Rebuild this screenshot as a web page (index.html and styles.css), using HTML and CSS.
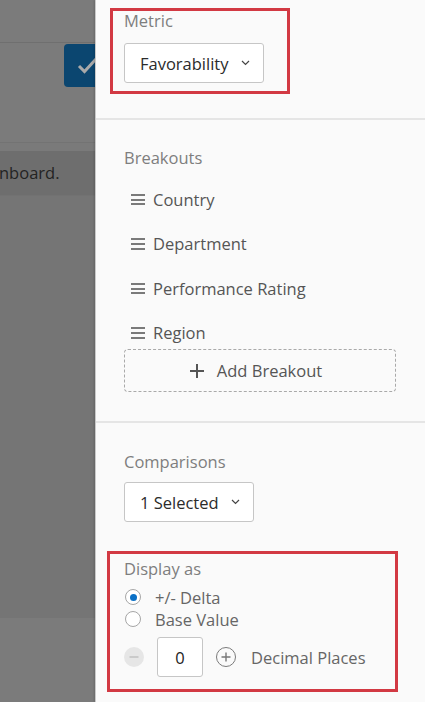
FILE: index.html
```html
<!DOCTYPE html>
<html>
<head>
<meta charset="utf-8">
<link rel="stylesheet" href="styles.css">
</head>
<body>
<div class="page">
  <div class="overlay">
    <div class="ov-top"></div>
    <div class="ov-row">
      <div class="ov-btn">
        <svg width="44" height="43" viewBox="0 0 44 43"><path d="M15 22 L20.5 27.5 L32 15" fill="none" stroke="#a9a9a9" stroke-width="3"/></svg>
      </div>
    </div>
    <div class="ov-gap"></div>
    <div class="ov-band">nboard.</div>
    <div class="ov-mid"></div>
    <div class="ov-bottom"></div>
  </div>
  <div class="panel">
    <section class="sec sec-metric">
      <div class="hl hl-metric">
        <div class="label">Metric</div>
        <div class="dropdown dd-metric">
          <span>Favorability</span>
          <svg class="chev" width="9" height="6" viewBox="0 0 9 6"><path d="M1 1 L4.5 4.5 L8 1" fill="none" stroke="#444" stroke-width="1.2"/></svg>
        </div>
      </div>
    </section>
    <section class="sec sec-breakouts">
      <div class="label">Breakouts</div>
      <div class="rows">
        <div class="row"><span class="ham"><i></i><i></i><i></i></span><span>Country</span></div>
        <div class="row"><span class="ham"><i></i><i></i><i></i></span><span>Department</span></div>
        <div class="row"><span class="ham"><i></i><i></i><i></i></span><span>Performance Rating</span></div>
        <div class="row"><span class="ham"><i></i><i></i><i></i></span><span>Region</span></div>
      </div>
      <div class="add">
        <svg width="14" height="14" viewBox="0 0 14 14"><path d="M7 0 V14 M0 7 H14" stroke="#555" stroke-width="2"/></svg>
        <span>Add Breakout</span>
      </div>
    </section>
    <section class="sec sec-comp">
      <div class="label">Comparisons</div>
      <div class="dropdown dd-comp">
        <span>1 Selected</span>
        <svg class="chev" width="9" height="6" viewBox="0 0 9 6"><path d="M1 1 L4.5 4.5 L8 1" fill="none" stroke="#444" stroke-width="1.2"/></svg>
      </div>
      <div class="hl hl-display">
        <div class="label">Display as</div>
        <div class="radio-row"><span class="radio checked"></span><span>+/- Delta</span></div>
        <div class="radio-row"><span class="radio"></span><span>Base Value</span></div>
        <div class="stepper">
          <span class="step minus"><svg width="20" height="20" viewBox="0 0 20 20"><path d="M5.5 10 H14.5" stroke="#c4c4c4" stroke-width="1.6"/></svg></span>
          <span class="num">0</span>
          <span class="step plus"><svg width="20" height="20" viewBox="0 0 20 20"><path d="M10 5.5 V14.5 M5.5 10 H14.5" stroke="#777" stroke-width="1.4"/></svg></span>
          <span class="dp">Decimal Places</span>
        </div>
      </div>
    </section>
  </div>
</div>
</body>
</html>
```
FILE: styles.css
```css
* { box-sizing: border-box; }
html, body { margin: 0; padding: 0; }
body {
  font-family: "Open Sans", "Liberation Sans", sans-serif;
  font-size: 16.5px;
  width: 425px;
  height: 702px;
  overflow: hidden;
  background: #fafafa;
}
.page { display: flex; height: 702px; }

.overlay {
  width: 95px;
  flex: none;
  display: flex;
  flex-direction: column;
  overflow: hidden;
  background: #777;
}
.ov-top { height: 43px; background: #7b7b7b; border-bottom: 1px solid #6f6f6f; }
.ov-row { height: 100px; background: #7b7b7b; border-bottom: 1px solid #737373; }
.ov-btn {
  width: 44px; height: 43px; margin: 1px 0 0 64px;
  background: #0b4670; border-radius: 4px;
}
.ov-btn svg { display: block; }
.ov-gap { height: 8px; background: #7a7a7a; }
.ov-band {
  height: 44px; background: #6e6e6e;
  color: #232323; line-height: 44px;
  padding-left: 0; margin-left: -1px;
  white-space: nowrap;
}
.ov-mid { height: 423px; background: #757575; border-top: 1px solid #727272; }
.ov-bottom { flex: 1; background: #7b7b7b; }

.panel {
  flex: 1;
  background: #fafafa;
  border-left: 1px solid #c9c9c9;
  box-shadow: -1px 0 2px rgba(0,0,0,0.15);
  display: flex;
  flex-direction: column;
}
.sec { border-bottom: 2px solid #e5e5e5; }
.label { color: #7e7e7e; line-height: 20px; height: 20px; }

.hl { border: 3px solid #d23943; }
.sec-metric { height: 120px; padding: 8px 0 0 14px; }
.hl-metric { width: 180px; height: 86px; padding: 0 0 0 11px; }

.dropdown {
  display: flex; align-items: center;
  height: 40px; background: #fff;
  border: 1px solid #c6c6c6; border-radius: 3px;
  color: #2b2b2b; padding-left: 15px;
}
.dd-metric { width: 140px; margin-top: 12px; }
.dd-metric .chev { margin-left: 12px; }
.dd-comp { width: 130px; margin-top: 10px; }
.dd-comp .chev { margin-left: 12px; }

.sec-breakouts { height: 303px; padding: 28px 29px 0 28px; }
.rows { display: flex; flex-direction: column; gap: 16.5px; margin-top: 17px; }
.row { height: 28px; display: flex; align-items: center; color: #555; padding-left: 7px; }
.ham { width: 14px; display: flex; flex-direction: column; gap: 2.7px; margin-right: 8px; margin-top: 1px; }
.ham i { display: block; height: 2px; background: #7a7a7a; }
.add {
  height: 43px; margin-top: 2.5px;
  border: 1px dashed #a9a9a9; border-radius: 4px;
  display: flex; align-items: center; justify-content: center;
  color: #555; gap: 13px; padding-right: 8px;
}
.add svg { display: block; }

.sec-comp { border-bottom: none; padding: 29px 0 0 28px; flex: 1; }
.hl-display { width: 291px; height: 141px; margin: 29px 0 0 -17px; padding: 5px 0 0 14px; }
.radio-row { display: flex; align-items: center; height: 22px; color: #666; }
.hl-display .label { margin-bottom: 7px; }
.radio {
  width: 16px; height: 16px; border-radius: 50%;
  border: 1px solid #a6a6a6; background: #fff;
  margin: 0 14px 0 1px; position: relative;
}
.radio.checked::after {
  content: ""; position: absolute; left: 3.5px; top: 3.5px;
  width: 7px; height: 7px; border-radius: 50%; background: #0a70c6;
}
.stepper { display: flex; align-items: center; margin-top: 7px; height: 40px; }
.step { width: 20px; height: 20px; border-radius: 50%; }
.step svg { display: block; }
.minus { background: #e6e6e6; }
.plus { border: 1px solid #7a7a7a; }
.plus svg { margin: -1px; }
.num {
  width: 46px; height: 40px; margin: 0 13px;
  background: #fff; border: 1px solid #c6c6c6; border-radius: 3px;
  display: flex; align-items: center; justify-content: center; color: #222;
}
.dp { color: #666; margin-left: 15px; }
```
